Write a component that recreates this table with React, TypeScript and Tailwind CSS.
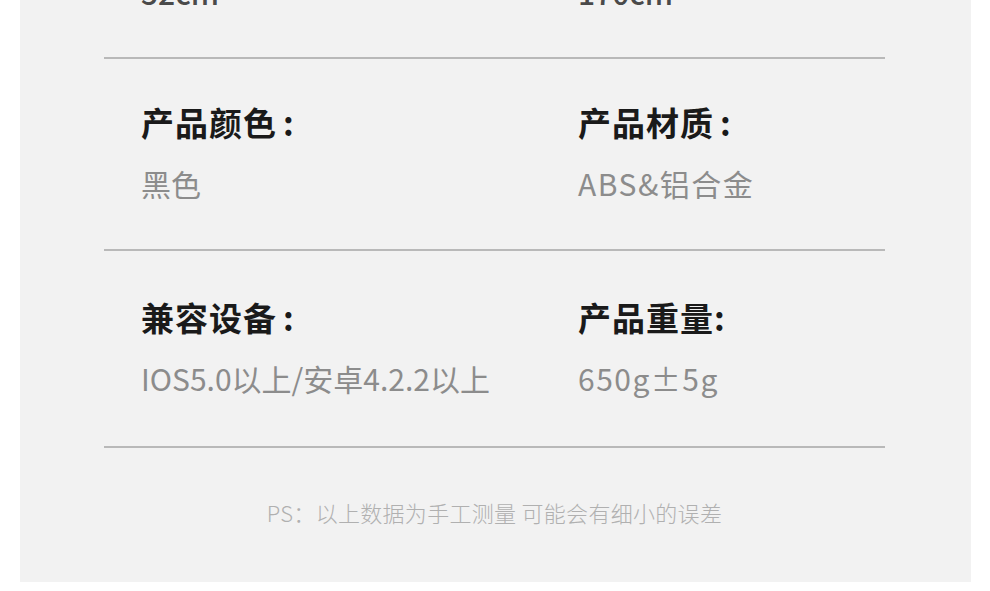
import React from "react";

const font = { fontFamily: '"Noto Sans CJK SC", "Noto Sans", sans-serif' };

function Cell({ label, colonGap, value, wide }: { label: string; colonGap: boolean; value: string; wide?: boolean }) {
  return (
    <div className="flex flex-col">
      <div className="flex items-center text-[33px] leading-[33px] font-bold tracking-[1px] text-[#1a1a1a] whitespace-nowrap">
        <span>{label}</span>
        <span className={colonGap ? "ml-[6px]" : "ml-[0px]"}>:</span>
      </div>
      <div
        className={
          wide
            ? "mt-[29px] text-[30px] leading-[30px] font-normal tracking-[1.5px] text-[#8c8c8c] whitespace-nowrap"
            : "mt-[29px] text-[30px] leading-[30px] font-normal text-[#8c8c8c] whitespace-nowrap"
        }
      >
        {value}
      </div>
    </div>
  );
}

export default function App() {
  return (
    <div className="w-[990px] h-[591px] bg-white overflow-hidden" style={font}>
      <div className="ml-[20px] w-[951px] h-[582px] bg-[#f2f2f2] overflow-hidden">
        <div className="ml-[84px] w-[781px]">
          <div className="h-[57px] grid grid-cols-[437px_1fr] pl-[37px] overflow-hidden">
            <div className="-mt-[23px] text-[30px] leading-[30px] font-medium text-[#4a4a4a]">52cm</div>
            <div className="-mt-[23px] text-[30px] leading-[30px] font-medium text-[#4a4a4a]">170cm</div>
          </div>
          <div className="h-[2px] bg-[#b9b9b9]" />
          <div className="h-[190px] grid grid-cols-[437px_1fr] pl-[37px] pt-[47px]">
            <Cell label="产品颜色" colonGap={true} value="黑色" />
            <Cell label="产品材质" colonGap={true} value="ABS&铝合金" wide />
          </div>
          <div className="h-[2px] bg-[#b9b9b9]" />
          <div className="h-[195px] grid grid-cols-[437px_1fr] pl-[37px] pt-[50px]">
            <Cell label="兼容设备" colonGap={true} value="IOS5.0以上/安卓4.2.2以上" />
            <Cell label="产品重量" colonGap={false} value="650g±5g" wide />
          </div>
          <div className="h-[2px] bg-[#b9b9b9]" />
          <div className="pt-[53px] text-center text-[22px] leading-[22px] tracking-[0.3px] font-light text-[#b0b0b0]">
            PS：以上数据为手工测量 可能会有细小的误差
          </div>
        </div>
      </div>
    </div>
  );
}
